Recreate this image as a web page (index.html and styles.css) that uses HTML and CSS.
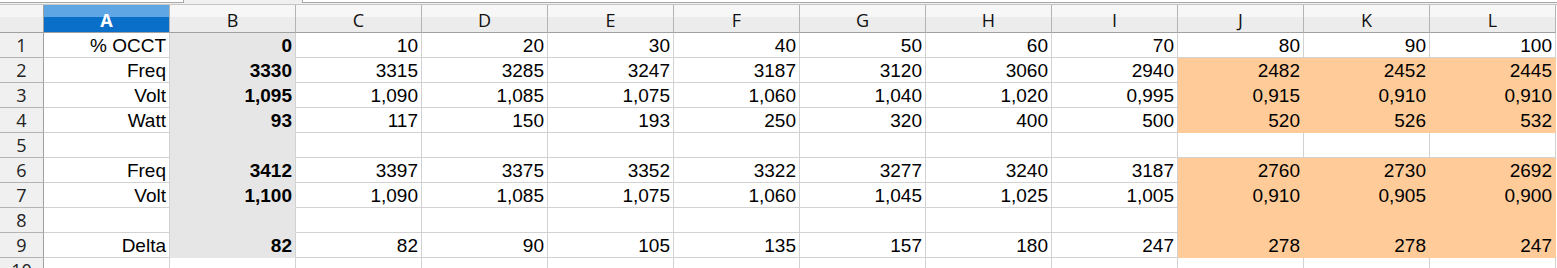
FILE: index.html
```html
<!DOCTYPE html>
<html>
<head>
<meta charset="utf-8">
<link rel="stylesheet" href="styles.css">
</head>
<body>
<div class="toolbar">
  <div class="tb-box tb-left"></div>
  <div class="tb-gap"></div>
  <div class="tb-box tb-right"></div>
</div>
<div class="sheet">
  <div class="corner"></div>
  <div class="ch sel">A</div><div class="ch">B</div><div class="ch">C</div><div class="ch">D</div><div class="ch">E</div><div class="ch">F</div><div class="ch">G</div><div class="ch">H</div><div class="ch">I</div><div class="ch">J</div><div class="ch">K</div><div class="ch">L</div>

  <div class="rh">1</div>
  <div class="c">% OCCT</div><div class="c b">0</div><div class="c">10</div><div class="c">20</div><div class="c">30</div><div class="c">40</div><div class="c">50</div><div class="c">60</div><div class="c">70</div><div class="c">80</div><div class="c">90</div><div class="c">100</div>

  <div class="rh">2</div>
  <div class="c">Freq</div><div class="c b">3330</div><div class="c">3315</div><div class="c">3285</div><div class="c">3247</div><div class="c">3187</div><div class="c">3120</div><div class="c">3060</div><div class="c">2940</div><div class="c o">2482</div><div class="c o">2452</div><div class="c o">2445</div>

  <div class="rh">3</div>
  <div class="c">Volt</div><div class="c b">1,095</div><div class="c">1,090</div><div class="c">1,085</div><div class="c">1,075</div><div class="c">1,060</div><div class="c">1,040</div><div class="c">1,020</div><div class="c">0,995</div><div class="c o">0,915</div><div class="c o">0,910</div><div class="c o">0,910</div>

  <div class="rh">4</div>
  <div class="c">Watt</div><div class="c b">93</div><div class="c">117</div><div class="c">150</div><div class="c">193</div><div class="c">250</div><div class="c">320</div><div class="c">400</div><div class="c">500</div><div class="c o">520</div><div class="c o">526</div><div class="c o">532</div>

  <div class="rh">5</div>
  <div class="c"></div><div class="c b"></div><div class="c"></div><div class="c"></div><div class="c"></div><div class="c"></div><div class="c"></div><div class="c"></div><div class="c"></div><div class="c"></div><div class="c"></div><div class="c"></div>

  <div class="rh">6</div>
  <div class="c">Freq</div><div class="c b">3412</div><div class="c">3397</div><div class="c">3375</div><div class="c">3352</div><div class="c">3322</div><div class="c">3277</div><div class="c">3240</div><div class="c">3187</div><div class="c o">2760</div><div class="c o">2730</div><div class="c o">2692</div>

  <div class="rh">7</div>
  <div class="c">Volt</div><div class="c b">1,100</div><div class="c">1,090</div><div class="c">1,085</div><div class="c">1,075</div><div class="c">1,060</div><div class="c">1,045</div><div class="c">1,025</div><div class="c">1,005</div><div class="c o">0,910</div><div class="c o">0,905</div><div class="c o">0,900</div>

  <div class="rh">8</div>
  <div class="c"></div><div class="c b"></div><div class="c"></div><div class="c"></div><div class="c"></div><div class="c"></div><div class="c"></div><div class="c"></div><div class="c"></div><div class="c o"></div><div class="c o"></div><div class="c o"></div>

  <div class="rh">9</div>
  <div class="c">Delta</div><div class="c b">82</div><div class="c">82</div><div class="c">90</div><div class="c">105</div><div class="c">135</div><div class="c">157</div><div class="c">180</div><div class="c">247</div><div class="c o">278</div><div class="c o">278</div><div class="c o">247</div>

  <div class="rh">10</div>
  <div class="c"></div><div class="c"></div><div class="c"></div><div class="c"></div><div class="c"></div><div class="c"></div><div class="c"></div><div class="c"></div><div class="c"></div><div class="c"></div><div class="c"></div><div class="c"></div>
</div>
</body>
</html>
```
FILE: styles.css
```css
html, body {
  margin: 0;
  padding: 0;
  background: #ffffff;
  overflow: hidden;
}
body {
  font-family: "Liberation Sans", Arial, sans-serif;
  color: #000;
}
.toolbar {
  display: flex;
  height: 5px;
  background: #f0f0f0;
  border-bottom: 1px solid #c6c6c6;
  box-sizing: border-box;
}
.tb-box {
  height: 3px;
  background: #ffffff;
  border-bottom: 1px solid #a8a8a8;
  border-right: 1px solid #a8a8a8;
  box-sizing: border-box;
}
.tb-left { width: 184px; }
.tb-gap { width: 118px; }
.tb-right { flex: 1; border-left: 1px solid #a8a8a8; border-right: none; }

.sheet {
  display: grid;
  grid-template-columns: 44px repeat(12, 126px);
  grid-template-rows: 28px;
  grid-auto-rows: 25px;
  font-size: 19px;
}
.corner, .ch, .rh, .c {
  box-sizing: border-box;
  border-right: 1px solid #d2d2d2;
  border-bottom: 1px solid #d2d2d2;
}
.corner {
  background: linear-gradient(#f5f5f5 0 45%, #ececec 45% 100%);
  border-right-color: #a0a0a0;
  border-bottom-color: #a0a0a0;
}
.ch {
  background: linear-gradient(#f7f7f7 0 45%, #ececec 45% 100%);
  border-right-color: #b4b4b4;
  border-bottom-color: #a0a0a0;
  display: flex;
  align-items: center;
  justify-content: center;
  font-family: "Open Sans", "Liberation Sans", sans-serif;
  font-size: 18px;
  color: #111;
  padding-top: 2px;
}
.ch.sel {
  background: linear-gradient(#5fa6e4 0 45%, #0a6fc9 45% 100%);
  color: #fff;
  font-weight: bold;
}
.rh {
  background: #f0f0f0;
  border-right-color: #a0a0a0;
  border-bottom-color: #b4b4b4;
  display: flex;
  align-items: center;
  justify-content: center;
  font-family: "Open Sans", "Liberation Sans", sans-serif;
  font-size: 18px;
  color: #222;
}
.c {
  display: flex;
  align-items: center;
  justify-content: flex-end;
  padding-right: 3px;
  line-height: 1;
  padding-top: 1px;
  white-space: nowrap;
}
.c.b {
  background: #e6e6e6;
  border-bottom-color: #e6e6e6;
  font-weight: bold;
}
.c.o {
  background: #ffcc99;
  border-bottom-color: #ffcc99;
  border-right-color: #ffcc99;
}
```
